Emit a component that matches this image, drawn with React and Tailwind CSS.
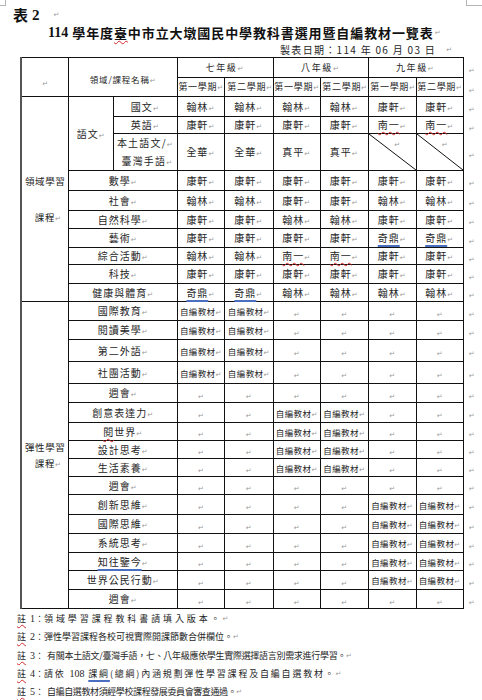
import React from "react";

function M({ className = "" }) {
  return (
    <span className={"inline-block h-[8px] align-baseline text-[7px] leading-[8px] text-[#9a9a9a] [font-family:'DejaVu_Sans',sans-serif] " + className}>↵</span>
  );
}

const red = "underline decoration-wavy decoration-[#d42a2a] decoration-[1px] underline-offset-[2px]";
const blue = "underline decoration-[#4a6fc0] decoration-[1.5px] underline-offset-[3px]";

const TD = "border border-[#111] p-0 text-center align-middle whitespace-nowrap leading-[12px]";
const END = "border-0 p-0 pl-[5px] text-left align-middle leading-[12px]";

function Val({ v }) {
  if (v === "") {
    return (
      <td className={TD}>
        <M />
      </td>
    );
  }
  if (v === "自編") {
    return (
      <td className={TD + " text-[8.5px] tracking-[0.4px]"}>
        自編教材<M />
      </td>
    );
  }
  if (v === "diag") {
    return (
      <td className="relative border border-[#111] p-0 text-center align-top leading-[12px]">
        <svg className="absolute inset-0 h-full w-full" preserveAspectRatio="none" viewBox="0 0 100 100">
          <line x1="0" y1="0" x2="100" y2="100" stroke="#111" strokeWidth="1" vectorEffect="non-scaling-stroke" />
        </svg>
        <div className="relative pl-[10px]">
          <M />
        </div>
      </td>
    );
  }
  let inner = v;
  if (v === "南一") inner = <span className={red}>南一</span>;
  if (v === "奇鼎") inner = <span className={blue}>奇鼎</span>;
  return (
    <td className={TD + " text-[10px] tracking-[1px]"}>
      {inner}
      <M />
    </td>
  );
}

const domain = [
  { h: "h-[20px]", sub: "國文", vals: ["翰林", "翰林", "翰林", "翰林", "康軒", "康軒"] },
  { h: "h-[17px]", sub: "英語", vals: ["康軒", "康軒", "康軒", "康軒", "南一", "南一"] },
  { h: "h-[36px]", sub: "本土", vals: ["全華", "全華", "真平", "真平", "diag", "diag"] },
  { h: "h-[20px]", name: "數學", vals: ["康軒", "康軒", "康軒", "康軒", "康軒", "康軒"] },
  { h: "h-[20px]", name: "社會", vals: ["翰林", "翰林", "康軒", "康軒", "翰林", "翰林"] },
  { h: "h-[18px]", name: "自然科學", vals: ["康軒", "康軒", "翰林", "翰林", "康軒", "康軒"] },
  { h: "h-[19px]", name: "藝術", vals: ["康軒", "康軒", "康軒", "康軒", "奇鼎", "奇鼎"] },
  { h: "h-[17px]", name: "綜合活動", vals: ["翰林", "翰林", "南一", "南一", "康軒", "康軒"] },
  { h: "h-[19px]", name: "科技", vals: ["康軒", "康軒", "康軒", "康軒", "康軒", "康軒"] },
  { h: "h-[18px]", name: "健康與體育", vals: ["奇鼎", "奇鼎", "翰林", "翰林", "翰林", "翰林"] },
];

const A = ["自編", "自編", "", "", "", ""];
const B = ["", "", "自編", "自編", "", ""];
const C = ["", "", "", "", "自編", "自編"];
const E = ["", "", "", "", "", ""];

const flex = [
  { h: "h-[19px]", name: "國際教育", vals: A },
  { h: "h-[19px]", name: "閱讀美學", vals: A },
  { h: "h-[22px]", name: "第二外語", vals: A },
  { h: "h-[22px]", name: "社團活動", vals: A },
  { h: "h-[19px]", name: "週會", vals: E },
  { h: "h-[20px]", name: "創意表達力", vals: B },
  { h: "h-[18px]", name: "閱世界", vals: B, special: "閱" },
  { h: "h-[18px]", name: "設計思考", vals: B },
  { h: "h-[18px]", name: "生活素養", vals: B },
  { h: "h-[18px]", name: "週會", vals: E },
  { h: "h-[20px]", name: "創新思維", vals: C },
  { h: "h-[19px]", name: "國際思維", vals: C },
  { h: "h-[19px]", name: "系統思考", vals: C },
  { h: "h-[18px]", name: "知往鑒今", vals: C, special: "blue" },
  { h: "h-[19px]", name: "世界公民行動", vals: C },
  { h: "h-[19px]", name: "週會", vals: E },
];

function Name({ r }) {
  let inner = r.name;
  if (r.special === "閱") {
    inner = (
      <>
        <span className={red}>閱</span>世界
      </>
    );
  }
  if (r.special === "blue") inner = <span className={blue}>知往鑒今</span>;
  return (
    <td colSpan={2} className={TD + " text-[10px] tracking-[1px]"}>
      {inner}
      <M />
    </td>
  );
}

export default function App() {
  return (
    <div className="relative h-[700px] w-[482px] overflow-hidden bg-white leading-[12px] text-[#262626] [font-family:'Noto_Sans_CJK_TC','Noto_Sans_CJK_JP',sans-serif]">
      {/* page corner marks */}
      <div className="absolute left-0 top-0 h-[6px] w-[6px] border-b border-r border-[#b5b5b5]" />
      <div className="absolute right-0 top-0 h-[6px] w-[16px] border-b border-l border-[#b5b5b5]" />

      <div className="flex h-[24px] items-end pl-[13px] text-[#111]">
        <span className="text-[15px] font-bold leading-[18px]">表</span>
        <span className="ml-[4px] text-[15px] font-bold leading-[18px] [font-family:'Liberation_Serif',serif]">2</span>
        <M className="ml-[14px] mb-[5px]" />
      </div>
      <div className="flex h-[18px] items-center pl-[48px] text-[#111]">
        <span className="text-[14px] font-bold leading-[18px] [font-family:'Liberation_Serif',serif]">114</span>
        <span className="ml-[4px] text-[13px] font-bold leading-[18px] tracking-[0.9px]">
          學年度<span className={red}>臺</span>中市立大墩國民中學教科書選用暨自編教材一覽表
        </span>
        <M className="ml-[1px]" />
      </div>
      <div className="flex h-[15px] items-center justify-end pr-[30px]">
        <span className="text-[10px] leading-[14px] tracking-[1.3px]">製表日期：114 年 06 月 03 日</span>
        <M className="ml-[10px]" />
      </div>

      <table className="ml-[20px] table-fixed border-collapse">
        <colgroup>
          <col className="w-[48px]" />
          <col className="w-[45px]" />
          <col className="w-[64px]" />
          <col className="w-[47px]" />
          <col className="w-[49px]" />
          <col className="w-[47px]" />
          <col className="w-[48px]" />
          <col className="w-[48px]" />
          <col className="w-[47px]" />
          <col className="w-[19px]" />
        </colgroup>
        <tbody>
          <tr className="h-[20px]">
            <td rowSpan={2} className={TD + " border-l-2 border-l-[#555] pt-[6px]"}>
              <M />
            </td>
            <td rowSpan={2} colSpan={2} className={TD + " pt-[4px] text-[8.5px] tracking-[0.8px]"}>
              領域/課程名稱<M />
            </td>
            <td colSpan={2} className={TD + " text-[9px] tracking-[1.6px]"}>
              七年級<M />
            </td>
            <td colSpan={2} className={TD + " text-[9px] tracking-[1.6px]"}>
              八年級<M />
            </td>
            <td colSpan={2} className={TD + " text-[9px] tracking-[1.6px]"}>
              九年級<M />
            </td>
            <td className={END}>
              <M />
            </td>
          </tr>
          <tr className="h-[19px]">
            {["第一學期", "第二學期", "第一學期", "第二學期", "第一學期", "第二學期"].map((t, i) => (
              <td key={i} className={TD + " text-right text-[9px] tracking-[0.7px]"}>
                {t}
                <M />
              </td>
            ))}
            <td className={END}>
              <M />
            </td>
          </tr>

          {domain.map((r, i) => (
            <tr key={"d" + i} className={r.h}>
              {i === 0 && (
                <td rowSpan={10} className={TD + " border-l-2 border-l-[#555] text-[9.5px] tracking-[0.6px]"}>
                  <div className="flex flex-col items-center gap-[22px] leading-[14px]">
                    <span>領域學習</span>
                    <span className="pl-[6px]">
                      課程<M />
                    </span>
                  </div>
                </td>
              )}
              {i === 0 && (
                <td rowSpan={3} className={TD + " text-[10px] tracking-[1px]"}>
                  語文<M />
                </td>
              )}
              {r.sub === "國文" && (
                <td className={TD + " text-[10px] tracking-[1.2px]"}>
                  國文<M />
                </td>
              )}
              {r.sub === "英語" && (
                <td className={TD + " text-[10px] tracking-[1.2px]"}>
                  英語<M />
                </td>
              )}
              {r.sub === "本土" && (
                <td className={TD + " text-[10px] tracking-[1.2px]"}>
                  <div className="leading-[18px]">
                    本土語文/<M />
                  </div>
                  <div className="pl-[4px] leading-[18px]">
                    臺灣手語<M />
                  </div>
                </td>
              )}
              {r.name && <Name r={r} />}
              {r.vals.map((v, j) => (
                <Val key={j} v={v} />
              ))}
              <td className={END}>
                <M />
              </td>
            </tr>
          ))}

          {flex.map((r, i) => (
            <tr key={"f" + i} className={r.h}>
              {i === 0 && (
                <td rowSpan={16} className={TD + " border-l-2 border-l-[#555] text-[9.5px] tracking-[0.6px]"}>
                  <div className="flex flex-col items-center gap-[2px] leading-[14px]">
                    <span>彈性學習</span>
                    <span className="pl-[6px]">
                      課程<M />
                    </span>
                  </div>
                </td>
              )}
              <Name r={r} />
              {r.vals.map((v, j) => (
                <Val key={j} v={v} />
              ))}
              <td className={END}>
                <M />
              </td>
            </tr>
          ))}
        </tbody>
      </table>

      <div className="pl-[17px] pt-[1px] text-[9px] leading-[18.3px]">
        <div className="flex items-center whitespace-nowrap">
          <span className={red}>註</span>
          <span className="ml-[4px] [font-family:'Liberation_Serif',serif] text-[10px]">1</span>
          <span>：</span>
          <span className="tracking-[2.9px]">領域學習課程教科書請填入版本。</span>
          <M />
        </div>
        <div className="flex items-center whitespace-nowrap">
          <span className={red}>註</span>
          <span className="ml-[4px] [font-family:'Liberation_Serif',serif] text-[10px]">2</span>
          <span>：</span>
          <span className="tracking-[0px]">彈性學習課程各校可視實際開課節數合併欄位。</span>
          <M />
        </div>
        <div className="flex items-center whitespace-nowrap">
          <span className={red}>註</span>
          <span className="ml-[4px] [font-family:'Liberation_Serif',serif] text-[10px]">3</span>
          <span className="mr-[3px]">：</span>
          <span className="tracking-[-0.3px]">有關本土語文/臺灣手語，七、八年級應依學生實際選擇語言別需求進行學習。</span>
          <M />
        </div>
        <div className="flex items-center whitespace-nowrap">
          <span className={red}>註</span>
          <span className="ml-[4px] [font-family:'Liberation_Serif',serif] text-[10px]">4</span>
          <span>：</span>
          <span className="tracking-[1.8px]">
            請依 <span className="[font-family:'Liberation_Serif',serif] text-[10px] tracking-[0px]">108</span>{" "}
            <span className={blue}>課綱</span>(總綱)內涵規劃彈性學習課程及自編自選教材。
          </span>
          <M />
        </div>
        <div className="flex items-center whitespace-nowrap">
          <span className={red}>註</span>
          <span className="ml-[4px] [font-family:'Liberation_Serif',serif] text-[10px]">5</span>
          <span className="mr-[3px]">：</span>
          <span className="tracking-[-0.4px]">自編自選教材須經學校課程發展委員會審查通過。</span>
          <M />
        </div>
      </div>
    </div>
  );
}
